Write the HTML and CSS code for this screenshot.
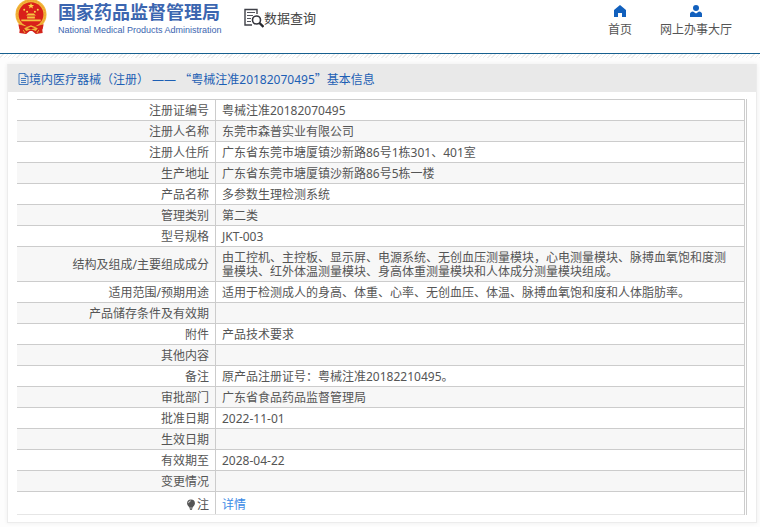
FILE: index.html
```html
<!DOCTYPE html>
<html lang="zh-CN">
<head>
<meta charset="utf-8">
<title>国家药品监督管理局 数据查询</title>
<link rel="stylesheet" href="styles.css">
</head>
<body>
<header class="site-header">
  <a class="brand" href="#">
    <svg class="emblem" viewBox="0 0 32 35" aria-hidden="true">
      <path d="M5 25L27 25L28 34L21 35L16 31L11 35L4 34Z" fill="#d3231b"/>
      <circle cx="16" cy="15" r="16" fill="#f2b63a"/>
      <circle cx="16" cy="15" r="14.400" fill="none" stroke="#e89a2c" stroke-width="1" stroke-dasharray="2 1"/>
      <circle cx="16" cy="15" r="12.800" fill="#d9201a"/>
      <path d="M16 3l.9 2.200h2.300l-1.800 1.400.7 2.200L16 7.500l-2.100 1.300.7-2.200L12.800 5.200h2.300z" fill="#fbd74b"/>
      <g fill="#fbd74b"><circle cx="9" cy="10" r="1"/><circle cx="12" cy="12" r="1"/><circle cx="20" cy="12" r="1"/><circle cx="23" cy="10" r="1"/></g>
      <path d="M11 16l2-2h6l2 2zM12 17h8v2h-8zM6 20h20v2H6z" fill="#f6c341"/>
      <path d="M3 25q13 5 26 0l-1 5q-12 4-24 0z" fill="#d3231b"/>
      <path d="M9 29l7-3 7 3-2 3-5-2-5 2z" fill="#f2b63a"/>
      <path d="M12 29l4-1.500 4 1.500-4 1z" fill="#c91b17"/>
      <path d="M8 31l2 3M24 31l-2 3" stroke="#f2b63a"/>
    </svg>
    <span class="brand-text">
      <strong class="brand-name">国家药品监督管理局</strong>
      <span class="brand-en">National Medical Products Administration</span>
    </span>
  </a>
  <a class="query" href="#">
    <svg class="query-icon" viewBox="0 0 20 20" aria-hidden="true">
      <path d="M8 17H1V1.500h12V6" fill="none" stroke="#3f4048" stroke-width="1.400"/>
      <path d="M3 4.500h8M3 7.500h6M3 10.500h4M3 13.500h4" stroke="#55565e" stroke-width="1.200"/>
      <circle cx="12.500" cy="12" r="4" fill="#fff" stroke="#33343c" stroke-width="1.600"/>
      <path d="M15.500 15l4 4" stroke="#25262c" stroke-width="2.400"/>
    </svg>
    <span>数据查询</span>
  </a>
  <nav class="nav">
    <a href="#">
      <svg viewBox="0 0 12 12" aria-hidden="true"><path d="M6 0l6 5v7H8V8H4v4H0V5z" fill="#1260bd"/></svg>
      <span>首页</span>
    </a>
    <a href="#">
      <svg viewBox="0 0 12 12" aria-hidden="true"><circle cx="6" cy="3" r="3" fill="#1260bd"/><path d="M0 12V9q0-2 3-2.500l3 2 3-2q3 .5 3 2.500v3z" fill="#1260bd"/></svg>
      <span>网上办事大厅</span>
    </a>
  </nav>
</header>
<div class="strip"></div>
<main class="card">
  <h1 class="card-title">
    <svg class="doc-icon" viewBox="0 0 10 12" aria-hidden="true"><path d="M.5.5h6l3 3v8h-9zM6.500.5v3h3M2.500 5.500h5M2.500 7.500h5M2.500 9.500h5" fill="none" stroke="#1d5fb4" stroke-width=".8"/></svg>
    <span>境内医疗器械（注册） —— <span class="quote">“</span>粤械注准20182070495<span class="quote">”</span>基本信息</span>
  </h1>
  <div class="card-body">
    <table class="info">
      <tbody>
        <tr><th scope="row">注册证编号</th><td>粤械注准20182070495</td></tr>
        <tr><th scope="row">注册人名称</th><td>东莞市森普实业有限公司</td></tr>
        <tr><th scope="row">注册人住所</th><td>广东省东莞市塘厦镇沙新路86号1栋301、401室</td></tr>
        <tr><th scope="row">生产地址</th><td>广东省东莞市塘厦镇沙新路86号5栋一楼</td></tr>
        <tr><th scope="row">产品名称</th><td>多参数生理检测系统</td></tr>
        <tr><th scope="row">管理类别</th><td>第二类</td></tr>
        <tr><th scope="row">型号规格</th><td>JKT-003</td></tr>
        <tr><th scope="row">结构及组成/主要组成成分</th><td>由工控机、主控板、显示屏、电源系统、无创血压测量模块，心电测量模块、脉搏血氧饱和度测量模块、红外体温测量模块、身高体重测量模块和人体成分测量模块组成。</td></tr>
        <tr><th scope="row">适用范围/预期用途</th><td>适用于检测成人的身高、体重、心率、无创血压、体温、脉搏血氧饱和度和人体脂肪率。</td></tr>
        <tr><th scope="row">产品储存条件及有效期</th><td></td></tr>
        <tr><th scope="row">附件</th><td>产品技术要求</td></tr>
        <tr><th scope="row">其他内容</th><td></td></tr>
        <tr><th scope="row">备注</th><td>原产品注册证号：粤械注准20182210495。</td></tr>
        <tr><th scope="row">审批部门</th><td>广东省食品药品监督管理局</td></tr>
        <tr><th scope="row">批准日期</th><td>2022-11-01</td></tr>
        <tr><th scope="row">生效日期</th><td></td></tr>
        <tr><th scope="row">有效期至</th><td>2028-04-22</td></tr>
        <tr><th scope="row">变更情况</th><td></td></tr>
        <tr class="note"><th scope="row"><svg class="bulb" viewBox="0 0 10 12" aria-hidden="true"><path d="M5 .5a4.300 4.300 0 0 1 4.300 4.300C9.300 7 7 8 6.800 9.500H3.200C3 8 .7 7 .7 4.800A4.300 4.300 0 0 1 5 .5zM3.500 10h3v1l-1 1h-1l-1-1z" fill="#555"/><path d="M2.300 4.500Q2.500 2.300 4.700 2" fill="none" stroke="#fff" stroke-width=".8"/></svg>注</th><td><a href="#">详情</a></td></tr>
      </tbody>
    </table>
  </div>
</main>
</body>
</html>
```
FILE: styles.css
```css
* {
  box-sizing: border-box;
}

body {
  margin: 0;
  background: #fdfdfd;
  color: #555;
  font: 12px/14px "Noto Sans", "Noto Sans CJK SC", sans-serif;
}

a {
  color: inherit;
  text-decoration: none;
}

svg {
  display: block;
  flex: none;
}

.site-header {
  display: flex;
  align-items: flex-start;
  height: 54px;
  padding: 0 28px 0 15px;
  background: #fff;
  border-bottom: 1px solid #17608f;
}

.strip {
  height: 4px;
  background: repeating-linear-gradient(135deg, #fff 0 2px, #ececec 2px 3px);
}

.brand {
  display: flex;
  gap: 11px;
}

.emblem {
  width: 32px;
  height: 34px;
}

.brand-text {
  display: flex;
  flex-direction: column;
  width: 160px;
  color: #3c66b0;
  white-space: nowrap;
}

.brand-name {
  font-size: 18px;
  line-height: 24px;
}

.brand-en {
  font-family: "Liberation Sans", sans-serif;
  font-size: 9px;
  line-height: 12px;
}

.query {
  display: flex;
  align-items: center;
  margin: 8px 0 0 26px;
  color: #444;
  font-size: 13px;
  line-height: 20px;
}

.query-icon {
  width: 20px;
  height: 20px;
}

.nav {
  display: flex;
  gap: 28px;
  margin-left: auto;
  padding-top: 5px;
}

.nav a {
  display: flex;
  flex-direction: column;
  align-items: center;
  gap: 6px;
}

.nav svg {
  width: 12px;
  height: 12px;
}

.card {
  margin: 6px 3px 4px 7px;
  background: #fff;
  border: 1px solid #ececec;
  border-top: 0;
  box-shadow: 0 0 4px #eee;
}

.card-title {
  display: flex;
  align-items: center;
  height: 28px;
  margin: 0;
  padding: 2px 0 0 10px;
  background: #e9e9e9;
  color: #1d5fb4;
  font-size: 12px;
  font-weight: 400;
}

.quote {
  font-family: "Noto Sans CJK SC", sans-serif;
}

.doc-icon {
  width: 11px;
  height: 12px;
}

.card-body {
  margin: 7px 9px;
  border-right: 3px double #ccc;
}

.info {
  width: 100%;
  border-collapse: separate;
  border-spacing: 0;
  border-bottom: 1px solid #e6e6e6;
}

.info th,
.info td {
  height: 21px;
  padding: 4px 6px 2px;
  border-top: 1px solid #ccc;
  font-weight: 400;
  text-align: left;
}

.info th {
  width: 199px;
  border-right: 1px solid #ccc;
  text-align: right;
}

.info td {
  padding-right: 12px;
}

.info tr:nth-child(even) {
  background: #f7f7f7;
}

.info .note th,
.info .note td {
  height: 23px;
  padding-top: 5px;
}

.info td a {
  color: #3b8ae6;
}

.bulb {
  display: inline-block;
  width: 10px;
  height: 11px;
  margin-right: 1px;
  vertical-align: -1px;
}
```
